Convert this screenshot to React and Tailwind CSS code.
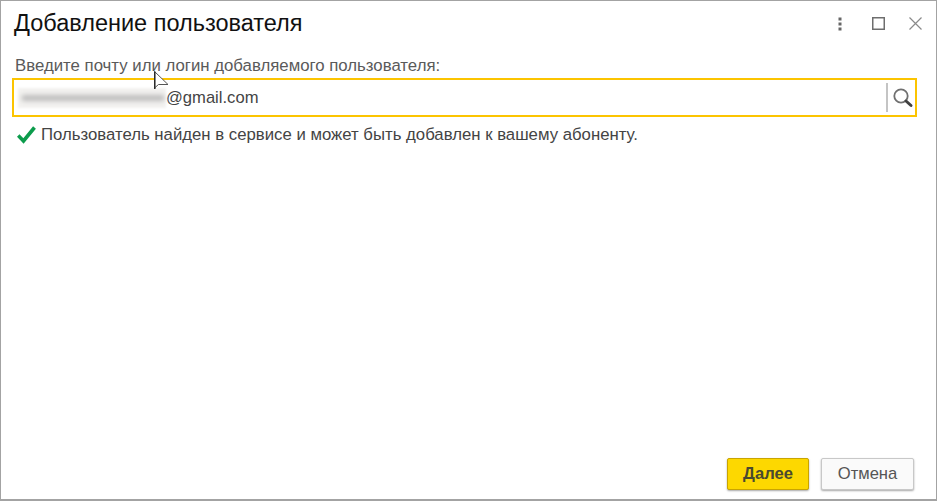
import React from 'react';

const FONT = "font-['Liberation_Sans',Arial,sans-serif]";

const MoreIcon = () => (
    <svg width="4" height="14" viewBox="0 0 4 14" className="mr-[6px] text-[#666]">
        <rect x="0.5" y="0.5" width="3" height="3" fill="currentColor" />
        <rect x="0.5" y="5.5" width="3" height="3" fill="currentColor" />
        <rect x="0.5" y="10.5" width="3" height="3" fill="currentColor" />
    </svg>
);

const SquareIcon = () => (
    <svg width="13" height="13" viewBox="0 0 13 13">
        <rect x="0.75" y="0.75" width="11.5" height="11.5" fill="none" stroke="#6e6e6e" strokeWidth="1.5" />
    </svg>
);

const CloseIcon = () => (
    <svg width="13" height="13" viewBox="0 0 13 13">
        <path d="M0.5 0.5 L12.5 12.5 M12.5 0.5 L0.5 12.5" fill="none" stroke="#8a8a8a" strokeWidth="1.2" />
    </svg>
);

const SearchIcon = () => (
    <svg width="22" height="22" viewBox="0 0 22 22">
        <circle cx="9" cy="9" r="6.7" fill="none" stroke="#707070" strokeWidth="1.8" />
        <path d="M14 14 L19 18.5" stroke="#404040" strokeWidth="3" strokeLinecap="round" />
    </svg>
);

const CheckIcon = () => (
    <svg width="19" height="18" viewBox="0 0 19 18">
        <path d="M1.2 9.5 L6.5 15 L17.5 1.5" fill="none" stroke="#0c9c4c" strokeWidth="3.6" />
    </svg>
);

const Cursor = () => (
    <svg width="16" height="22" viewBox="0 0 16 22" className="absolute left-[154px] top-[71px]">
        <path d="M0.5 0.5 L0.5 17 L4.5 13.5 L14 13.5 Z" fill="#fff" stroke="#555" strokeWidth="1" />
        <path d="M0.75 0.5 L0.75 18" stroke="#2a2a2a" strokeWidth="1.6" />
    </svg>
);

export default function App() {
    return (
        <div className={`${FONT} relative flex h-[503px] w-[938px] flex-col overflow-hidden bg-white`}>
            <div className="flex h-[501px] w-[937px] flex-col border border-b-2 border-[#a3a3a3]">
                {/* Заголовок окна */}
                <header className="flex h-[45px] items-center justify-between pl-[13px] pr-[14px]">
                    <h1 className="text-[23.5px] leading-none text-[#111]">Добавление пользователя</h1>
                    <div className="flex items-center gap-[24px]">
                        <MoreIcon />
                        <SquareIcon />
                        <CloseIcon />
                    </div>
                </header>

                <main className="flex-1 pl-[11px] pr-[19px]">
                    <p className="pl-[3px] pt-[11px] text-[16.8px] leading-[17px] text-[#5a5a5a]">
                        Введите почту или логин добавляемого пользователя:
                    </p>
                    <div className="mt-[4px] flex h-[39px] items-center border-[2px] border-[#fcc400] pl-[4px]">
                        {/* Размытый логин */}
                        <div className="flex h-[20px] w-[148px] items-center bg-[#f3f2f0] blur-[1px]">
                            <div className="ml-[4px] h-[6px] w-[142px] bg-[#bcbcbc] blur-[2px]"></div>
                        </div>
                        <span className="pt-[2px] text-[16.6px] text-[#444]">@gmail.com</span>
                        <div className="ml-auto flex h-[29px] items-center border-l-2 border-[#c4c4c4] pl-[4px] pr-[1px]">
                            <SearchIcon />
                        </div>
                    </div>
                    <div className="mt-[8px] flex items-center pl-[5px]">
                        <CheckIcon />
                        <span className="ml-[5px] text-[16.75px] leading-[20px] text-[#444]">
                            Пользователь найден в сервисе и может быть добавлен к вашему абоненту.
                        </span>
                    </div>
                </main>

                {/* Кнопки */}
                <footer className="flex justify-end gap-[12px] pb-[9px] pr-[22px]">
                    <button className="h-[32px] w-[82px] rounded-[2px] border border-[#c9a400] bg-[#fdd800] text-[16.6px] font-bold text-[#4a4a30] shadow-[0_1px_2px_rgba(0,0,0,0.35)]">
                        Далее
                    </button>
                    <button className="h-[32px] w-[93px] rounded-[2px] border border-[#c8c8c8] bg-[#fafafa] text-[16.6px] text-[#555] shadow-[0_1px_2px_rgba(0,0,0,0.35)]">
                        Отмена
                    </button>
                </footer>
            </div>
            <Cursor />
        </div>
    );
}
